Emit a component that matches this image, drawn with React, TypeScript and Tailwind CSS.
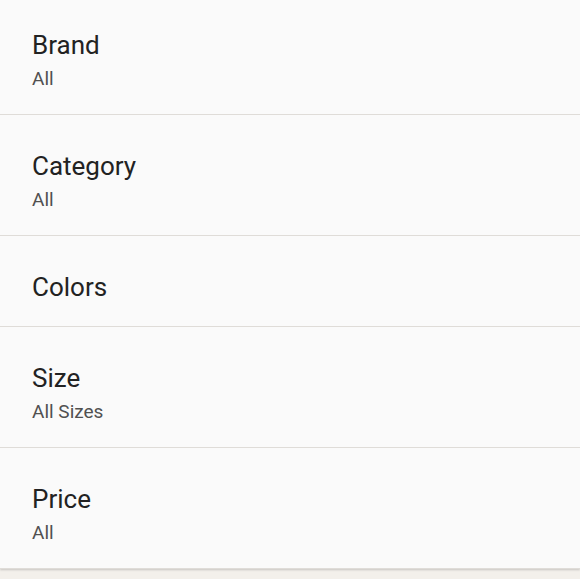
import React from 'react';

interface FilterRowProps {
  title: string;
  value?: string;
}

const filters: FilterRowProps[] = [
  { title: 'Brand', value: 'All' },
  { title: 'Category', value: 'All' },
  { title: 'Colors' },
  { title: 'Size', value: 'All Sizes' },
  { title: 'Price', value: 'All' },
];

const FilterRow: React.FC<FilterRowProps> = ({ title, value }) => (
  <div className="px-[32px] pt-[35px] pb-[23px] border-b border-[#dfdcd8]">
    <div className="text-[26px] leading-[32px] text-[#222222]">{title}</div>
    {value && <div className="mt-[6px] text-[19px] leading-[24px] text-[#505050]">{value}</div>}
  </div>
);

export default function App() {
  return (
    <div className="min-h-screen bg-[#f3f0eb] overflow-hidden" style={{ fontFamily: 'Roboto, "Noto Sans", sans-serif' }}>
      {/* Filter list card */}
      <div className="-mt-[6px] bg-[#fafafa] shadow-[0_1px_2px_rgba(0,0,0,0.18)]">
        {filters.map((f) => (
          <FilterRow key={f.title} title={f.title} value={f.value} />
        ))}
      </div>
    </div>
  );
}
